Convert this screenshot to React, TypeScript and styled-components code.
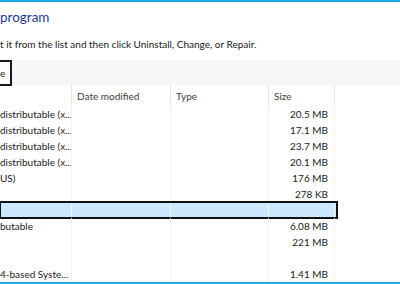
import styled, {createGlobalStyle} from "styled-components";

const GlobalStyle = createGlobalStyle`
    html, body {
        margin: 0;
        padding: 0;
        background: #ffffff;
    }
    body {
        font-family: Lato, "Open Sans", sans-serif;
    }
`

interface Row {
    name: string,
    size: string,
    selected?: boolean,
}

const rows: Row[] = [
    {name: "distributable (x...", size: "20.5 MB"},
    {name: "distributable (x...", size: "17.1 MB"},
    {name: "distributable (x...", size: "23.7 MB"},
    {name: "distributable (x...", size: "20.1 MB"},
    {name: "US)", size: "176 MB"},
    {name: "", size: "278 KB"},
    {name: "", size: "", selected: true},
    {name: "butable", size: "6.08 MB"},
    {name: "", size: "221 MB"},
    {name: "", size: ""},
    {name: "4-based Syste...", size: "1.41 MB"},
];

export default function App() {
    return <>
        <GlobalStyle/>
        <Window>
            <Title>program</Title>
            <Subtitle>t it from the list and then click Uninstall, Change, or Repair.</Subtitle>
            <Toolbar>
                <ToolButton>e</ToolButton>
            </Toolbar>
            <List>
                <HeaderRow>
                    <HeadCell/>
                    <HeadCell $divider>Date modified</HeadCell>
                    <HeadCell $divider>Type</HeadCell>
                    <HeadCell $divider>Size</HeadCell>
                    <HeadCell $divider/>
                </HeaderRow>
                {rows.map((r, i) => <ItemRow key={i} $selected={r.selected}>
                    <Cell>{r.name}</Cell>
                    <Cell $divider/>
                    <Cell $divider/>
                    <Cell $divider $right>{r.size}</Cell>
                    <Cell $divider/>
                </ItemRow>)}
            </List>
        </Window>
    </>
}

const Window = styled.div`
    width: 400px;
    height: 284px;
    box-sizing: border-box;
    border-top: 2px solid #19ace6;
    border-bottom: 2px solid #19ace6;
    overflow: hidden;
    display: flex;
    flex-direction: column;
    background: #ffffff;
`

const Title = styled.div`
    height: 27px;
    padding-top: 4px;
    box-sizing: border-box;
    font-size: 13.5px;
    line-height: 22px;
    color: #1e3b95;
`

const Subtitle = styled.div`
    height: 34px;
    padding-top: 8px;
    box-sizing: border-box;
    font-size: 10px;
    line-height: 16px;
    color: #1a1a1a;
    white-space: nowrap;
`

const Toolbar = styled.div`
    height: 25px;
    background: #f4f6f8;
    display: flex;
    align-items: stretch;
`

const ToolButton = styled.div`
    width: 12px;
    height: 26px;
    box-sizing: border-box;
    border: 2px solid #1a1a1a;
    border-left: none;
    background: #ffffff;
    font-size: 10px;
    line-height: 22px;
    color: #1a1a1a;
`

const List = styled.div`
    display: flex;
    flex-direction: column;
`

const columns = `71px 99px 98px 66px 1fr`;

const HeaderRow = styled.div`
    display: grid;
    grid-template-columns: ${columns};
    height: 21px;
`

const HeadCell = styled.div<{$divider?: boolean}>`
    border-left: ${p => p.$divider ? "1px solid #e5e5e5" : "none"};
    padding-left: 5px;
    font-size: 10px;
    line-height: 23px;
    color: #3d3d3d;
    white-space: nowrap;
    overflow: hidden;
`

const ItemRow = styled.div<{$selected?: boolean}>`
    display: grid;
    grid-template-columns: ${columns};
    height: 16px;
    box-sizing: border-box;
    background: ${p => p.$selected ? "#cce8ff" : "transparent"};
    outline: ${p => p.$selected ? "2px solid #111111" : "none"};
    outline-offset: -1px;
    width: ${p => p.$selected ? "337px" : "auto"};
`

const Cell = styled.div<{$divider?: boolean, $right?: boolean}>`
    border-left: ${p => p.$divider ? "1px solid #f4f4f4" : "none"};
    padding: 0 6px 0 0;
    text-align: ${p => p.$right ? "right" : "left"};
    font-size: 10px;
    line-height: 17px;
    color: #1a1a1a;
    white-space: nowrap;
`
